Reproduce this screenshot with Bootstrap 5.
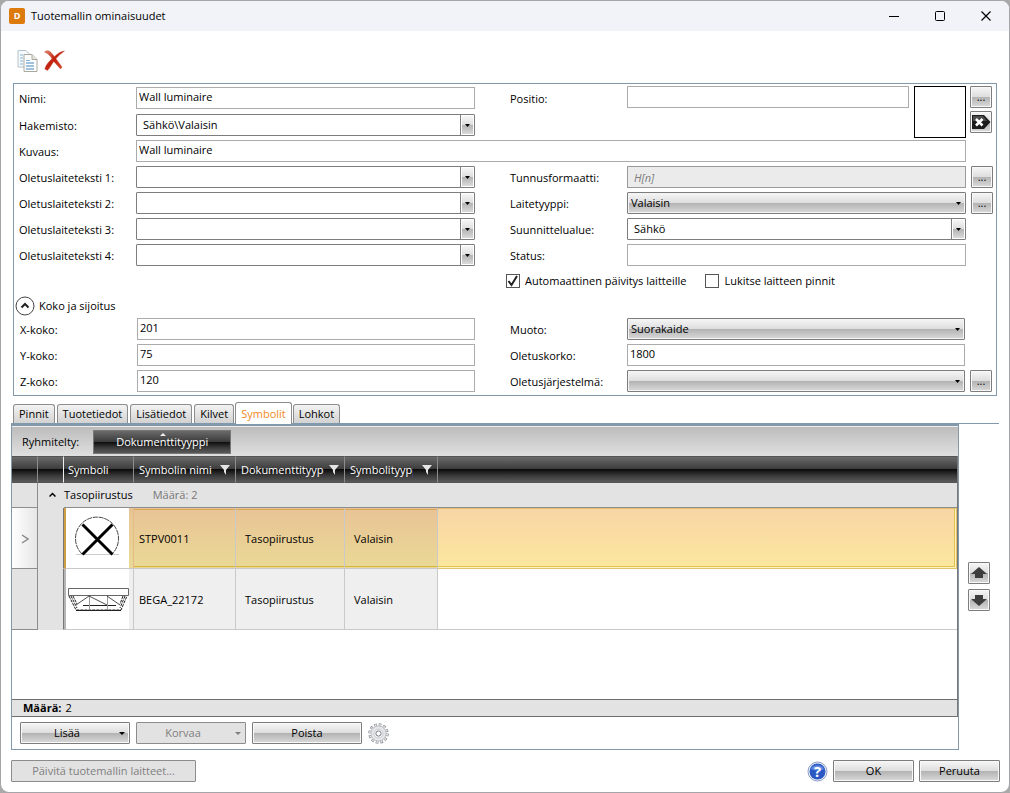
<!DOCTYPE html>
<html lang="fi">
<head>
<meta charset="utf-8">
<meta name="viewport" content="width=device-width, initial-scale=1">
<title>Tuotemallin ominaisuudet</title>
<link href="https://cdn.jsdelivr.net/npm/bootstrap@5.3.0/dist/css/bootstrap.min.css" rel="stylesheet">
<style>
:root{
  --edge:#7d7d7d; --frame:#8299ab;
  --gloss:linear-gradient(#f6f6f6,#dedede 48%,#b2b2b2 50%,#dadada);
  --dark:linear-gradient(#6a6a6a,#3c3c3c 48%,#0c0c0c 50%,#3a3a3a 75%,#5a5a5a);
  --arrow:url("data:image/svg+xml,%3Csvg xmlns='http://www.w3.org/2000/svg' width='5' height='3'%3E%3Cpath d='M0 0h5L2.500 3z' fill='%23000'/%3E%3C/svg%3E");
}
body{font:11px/16px "Open Sans","Noto Sans",sans-serif;color:#000;background:#a9a9a9}
.window{min-height:100vh;background:#fff;border:1px solid #a3a5a8;border-radius:9px;overflow:hidden}
.titlebar{height:30px;background:#f1f3f9;padding-left:8px}
.titlebar svg.logo{margin-right:6px}
.cap{width:46px;height:30px;border:0;background:none;padding:0;display:grid;place-items:center}
.tools{height:52px;padding:18px 0 0 16px;gap:6px}
.plain{border:0;background:none;padding:0;line-height:0}
.sheet{border:1px solid var(--frame);margin:0 12px 0 12px;padding:2px 3px 3px 5px}
.fields{display:grid;grid-template-columns:117px 1fr 31px 121px 1fr 27px;row-gap:4px;align-items:center;grid-auto-rows:22px}
.fields-top{grid-template-rows:24px}
.fields-size{padding:0 1px 0 1px}
.fields label{padding-top:1px}
.fields label.r{grid-column:4;padding-left:4px}
.fields .wide{grid-column:2/6}
.fields .end{justify-self:end}
.box,.combo,.pick{width:100%;min-width:0;height:22px;border:1px solid #ababab;background:#fff;border-radius:0;padding:0 2px 3px;color:#000;outline-offset:-1px}
.box.off{background:#ebebeb;color:#7c7c7c;font-style:italic;padding:0 6px;border-color:#9a9a9a}
.combo,.pick{appearance:none;border-color:var(--edge);border-radius:1px}
.combo{padding:0 20px 0 6px;background:var(--arrow) right 4px center no-repeat,var(--gloss) right 1px center/11px 18px no-repeat,linear-gradient(var(--edge),var(--edge)) right 13px top/1px 100% no-repeat,#fff}
.pick{padding:0 18px 0 3px;background:var(--arrow) right 4px center no-repeat,var(--gloss);box-shadow:inset 0 0 0 1px #f4f4f4}
.gloss{height:22px;border:1px solid var(--edge);border-radius:1px;background:var(--gloss);box-shadow:inset 0 0 0 1px #f8f8f8;padding:0 4px;color:#000}
.gloss:disabled{background:#e2e2e2;border-color:#8c8c8c;box-shadow:none;color:#7f7f7f}
.sq{width:22px;padding:0;display:grid;place-items:center;line-height:10px}
.top-right{grid-column:5/7;grid-row:1/3;align-self:start;padding-right:1px}
.top-right .thumb{margin:0 4px 0 5px}
.thumb{width:52px;height:52px;border:1px solid #000;flex:none}
.tick{appearance:none;width:14px;height:14px;border:1px solid #555;border-radius:0;margin:0 5px 0 0;background:#fff center no-repeat}
.tick:checked{background-image:url("data:image/svg+xml,%3Csvg xmlns='http://www.w3.org/2000/svg' width='12' height='12'%3E%3Cpath d='M1.500 6l3 4 5.500-9' fill='none' stroke='%23222' stroke-width='2'/%3E%3C/svg%3E")}
.fields .ticks{grid-column:4/7}
.fields .ticks label{padding-top:0}
.fields .ticks .tick:not(:first-child){margin-left:19px}
.expander{height:20px;margin:4px 0 2px -4px;gap:4px}
.tabs{height:28px;margin:0 10px 0 10px;padding-left:2px;gap:2px;border-bottom:1px solid var(--frame)}
.tabs button{height:19px;border:1px solid #8d8d8d;border-bottom:0;border-radius:3px 3px 0 0;background:linear-gradient(#f3f3f3,#d2d2d2);padding:0 5px;line-height:18px;color:#000}
.tabs button.active{height:22px;background:#fff;color:#f08a24;margin:0 -1px -1px;line-height:21px}
.panel{flex:1 1 0;min-width:0;border:1px solid var(--frame);border-top-width:2px}
.pane-row{margin:0 19px 0 10px;gap:9px}
.groupbar{height:30px;border-top:1px solid #eee;background:linear-gradient(#bcbcbc,#e0e0e0);padding-left:10px;gap:14px}
.groupkey{width:138px;height:24px;border:1px solid #777;background:var(--dark);color:#fff;padding:0;position:relative}
.groupkey::before{content:"";position:absolute;left:66px;top:2px;border:3px solid transparent;border-top:0;border-bottom-color:#eee}
.gridbox{flex:1 0 auto;border-right:1px solid #777}
.symbols{table-layout:fixed;width:100%;border-collapse:separate;border-spacing:0}
.symbols th{height:27px;background:var(--dark);color:#fff;font-weight:400;padding:0 0 0 4px;border-right:1px solid #8c8c8c;border-bottom:1px solid #555;border-top:1px solid #555;overflow:hidden;white-space:nowrap}
.symbols th:nth-child(2){border-right:1px solid #eee}
.symbols th:nth-child(n+4){padding-left:5px}
.symbols th:last-child{border-right:0}
.symbols td{padding:1px 0 0 5px}
.symbols .grp td{height:25px;background:#e3e3e3;border-bottom:1px solid #8d8d8d;padding:0}
.symbols .grp td:nth-child(2){border-bottom-color:#e3e3e3}
.grp-line{margin-left:-15px}
.grp-count{color:#777;margin-left:20px}
.symbols .item td{height:61px;border-bottom:1px solid #c9c9c9;border-right:1px solid #c9c9c9;background:#efefef}
.symbols .item td.n{padding-left:9px}
.symbols .item td.n.first{padding-left:5px}
.symbols td.mark-cell,.symbols .grp td.mark-cell{border-right:1px solid #8d8d8d;border-bottom:1px solid #8d8d8d;background:#e3e3e3;text-align:center;padding:0}
.symbols .sel td.mark-cell{background:linear-gradient(90deg,#fff,#e6e6e6)}
.symbols .item td.gut{background:#e3e3e3;border-right:1px solid #777;border-bottom-color:#e3e3e3}
.symbols .item td.pic{padding:2px 0 0 2px;border-left:2px solid #b5b5b5;background:linear-gradient(#efefef,#efefef) right/4px 100% no-repeat,#fff}
.symbols .sel td.pic{border-left-color:#cf9f45;border-right-color:#e3bd85;background:linear-gradient(#e9c396,#e9d995) right/4px 100% no-repeat,#fff}
.symbols .item td:last-child{border-right:0;background:#fff}
.symbols .sel td.n{background:linear-gradient(#d9b441,#d9b441) left 0 bottom 1px/100% 1px no-repeat,linear-gradient(#d9a757,#d9a757) left 0 top 1px/100% 1px no-repeat,linear-gradient(#e9c396,#e9d995)}
.symbols .sel td:last-child{background:linear-gradient(#f8d5a5,#fbe79e);border-bottom-color:#e0c46a;box-shadow:inset -1px 1px #e3bf6c,inset -2px -1px #fff3c4,inset -3px -2px #e5c24c}
.headname{overflow:hidden;flex:1 1 0}
.foot{height:18px;background:#e3e3e3;border-top:1px solid #6f6f6f;border-bottom:1px solid #6f6f6f;border-right:1px solid #777;padding-left:11px}
.actions{height:32px;padding:0 8px;gap:6px}
.w110{width:110px}
.drop{display:grid;grid-template-columns:1fr 12px;align-items:center;padding-left:0}
.drop::after{content:"";border:3px solid transparent;border-bottom:0;border-top-color:currentColor;width:0;justify-self:end}
.movers{width:22px;gap:5px;padding-top:138px}
.closing{height:42px;padding:0 9px 0 10px;gap:5px}
.w185{width:185px}.w81{width:81px}
</style>
</head>
<body>
<main class="window d-flex flex-column">
  <header class="titlebar d-flex align-items-center">
    <svg class="logo" width="16" height="16" viewBox="0 0 16 16" aria-hidden="true"><rect width="16" height="16" rx="2" fill="#dd7a0c"/><text x="8" y="11" text-anchor="middle" font-family="Open Sans" font-weight="700" font-size="9" fill="#fff">D</text></svg>
    <span class="me-auto">Tuotemallin ominaisuudet</span>
    <button class="cap" aria-label="Pienennä"><svg width="11" height="11"><path d="M0 5.500h10" stroke="#000"/></svg></button>
    <button class="cap" aria-label="Suurenna"><svg width="11" height="11"><rect x=".5" y=".5" width="9" height="9" rx="1" fill="none" stroke="#000"/></svg></button>
    <button class="cap" aria-label="Sulje"><svg width="11" height="11"><path d="M.5.5l9 9M9.500.5l-9 9" stroke="#000" stroke-width="1.200"/></svg></button>
  </header>

  <div class="tools d-flex align-items-start">
    <button class="plain" aria-label="Kopioi"><svg width="21" height="24" viewBox="0 0 21 24"><path d="M1 1.500h8l4 4V18H1z" fill="#f6fafc" stroke="#b4c2cc"/><path d="M3 6h3M3 9h3M3 12h3M3 15h3" stroke="#84b4da"/><path d="M7 5.500h8l5 5V22.500H7z" fill="#fdfdfd" stroke="#a9a9a0"/><path d="M15 5.500v5h5" fill="#e6e6e0" stroke="#a9a9a0"/><path d="M9 11.500h4" stroke="#84b4da"/><path d="M9 14h8M9 17h8M9 20h8" stroke="#3f86bf"/></svg></button>
    <button class="plain" aria-label="Poista malli"><svg width="21" height="24" viewBox="0 0 21 24"><defs><linearGradient id="rd" x1="0" y1="0" x2="1" y2="1"><stop offset="0" stop-color="#e28a72"/><stop offset=".45" stop-color="#c2210c"/><stop offset="1" stop-color="#dc4a33"/></linearGradient></defs><path d="M.5 3C2 1.500 5 1.200 7 3.500l3.500 4C13.500 4.500 17 2.300 20.500 2 17 4.500 14 7 12 9.800L18 18 16.500 20 9.800 12.500C7.500 15.500 6 19 3.500 21.500L.8 20C2 15.500 5 12.500 8 9.800 6 6.500 4 4.500.5 3z" fill="url(#rd)" stroke="#c54a38" stroke-width=".4"/></svg></button>
  </div>

  <section class="sheet">
    <div class="fields fields-top">
      <label for="nimi">Nimi:</label><input id="nimi" class="box" value="Wall luminaire">
      <label class="r" for="positio">Positio:</label>
      <div class="top-right d-flex align-items-start">
        <input id="positio" class="box">
        <div class="thumb"></div>
        <div class="d-grid" style="row-gap:3px">
          <button class="gloss sq" aria-label="Valitse kuva">...</button>
          <button class="gloss sq" aria-label="Poista kuva"><svg width="20" height="20" viewBox="0 0 20 20"><path d="M1 3h12l6.500 7-6.500 7H1z" fill="#1c1c1c"/><path d="M2 4h10l4 5H2z" fill="#4c4c4c"/><path d="M5 7l6.500 6.500M11.500 7L5 13.500" stroke="#fff" stroke-width="2.500"/></svg></button>
        </div>
      </div>
      <label for="hak" style="grid-column:1">Hakemisto:</label><select id="hak" class="combo"><option>Sähkö\Valaisin</option></select>
      <label for="kuv" style="grid-column:1">Kuvaus:</label><input id="kuv" class="box wide" value="Wall luminaire">
      <label for="o1" style="grid-column:1">Oletuslaiteteksti 1:</label><select id="o1" class="combo"><option></option></select>
      <label class="r" for="tun">Tunnusformaatti:</label><input id="tun" class="box off" value="H[n]" disabled><button class="gloss sq end">...</button>
      <label for="o2">Oletuslaiteteksti 2:</label><select id="o2" class="combo"><option></option></select>
      <label class="r" for="lt">Laitetyyppi:</label><select id="lt" class="pick"><option>Valaisin</option></select><button class="gloss sq end">...</button>
      <label for="o3">Oletuslaiteteksti 3:</label><select id="o3" class="combo"><option></option></select>
      <label class="r" for="sa">Suunnittelualue:</label><select id="sa" class="combo"><option>Sähkö</option></select>
      <label for="o4" style="grid-column:1">Oletuslaiteteksti 4:</label><select id="o4" class="combo"><option></option></select>
      <label class="r" for="st">Status:</label><input id="st" class="box">
      <div class="ticks d-flex align-items-center">
        <input type="checkbox" class="tick" id="auto" checked><label for="auto">Automaattinen päivitys laitteille</label>
        <input type="checkbox" class="tick" id="luk"><label for="luk">Lukitse laitteen pinnit</label>
      </div>
    </div>
    <div class="expander d-flex align-items-center">
      <button class="plain" aria-label="Koko ja sijoitus" aria-expanded="true"><svg width="20" height="20"><circle cx="10" cy="10" r="9" fill="#fff" stroke="#444"/><path d="M6.500 11.500L10 8l3.500 3.500" fill="none" stroke="#222" stroke-width="2"/></svg></button>
      <span>Koko ja sijoitus</span>
    </div>
    <div class="fields fields-size">
      <label for="xk">X-koko:</label><input id="xk" class="box" value="201">
      <label class="r" for="mu">Muoto:</label><select id="mu" class="pick"><option>Suorakaide</option></select>
      <label for="yk" style="grid-column:1">Y-koko:</label><input id="yk" class="box" value="75">
      <label class="r" for="ok">Oletuskorko:</label><input id="ok" class="box" value="1800">
      <label for="zk" style="grid-column:1">Z-koko:</label><input id="zk" class="box" value="120">
      <label class="r" for="oj">Oletusjärjestelmä:</label><select id="oj" class="pick"><option></option></select><button class="gloss sq end">...</button>
    </div>
  </section>

  <nav class="tabs d-flex align-items-end" role="tablist">
    <button role="tab">Pinnit</button><button role="tab">Tuotetiedot</button><button role="tab">Lisätiedot</button><button role="tab">Kilvet</button><button role="tab" class="active" aria-selected="true">Symbolit</button><button role="tab">Lohkot</button>
  </nav>

  <div class="pane-row d-flex flex-grow-1">
    <section class="panel d-flex flex-column">
      <div class="groupbar d-flex align-items-center">
        <span>Ryhmitelty:</span><button class="groupkey">Dokumenttityyppi</button>
      </div>
      <div class="gridbox">
        <table class="symbols">
          <colgroup><col style="width:26px"><col style="width:26px"><col style="width:70px"><col style="width:102px"><col style="width:109px"><col style="width:93px"><col></colgroup>
          <thead><tr>
            <th></th><th></th><th>Symboli</th>
            <th><div class="d-flex align-items-center"><span class="headname">Symbolin nimi</span><svg class="me-1" width="12" height="12"><path d="M1 1h10L7 6v5L5 8V6z" fill="#e4e4e4"/></svg></div></th>
            <th><div class="d-flex align-items-center"><span class="headname">Dokumenttityyppi</span><svg class="ms-1 me-1" width="12" height="12"><path d="M1 1h10L7 6v5L5 8V6z" fill="#e4e4e4"/></svg></div></th>
            <th><div class="d-flex align-items-center"><span class="headname">Symbolityyppi</span><svg class="ms-2 me-1" width="12" height="12"><path d="M1 1h10L7 6v5L5 8V6z" fill="#e4e4e4"/></svg></div></th>
            <th></th>
          </tr></thead>
          <tbody>
            <tr class="grp"><td class="mark-cell"></td><td></td><td colspan="5"><div class="grp-line d-flex align-items-center"><svg class="me-2" width="7" height="6"><path d="M.5 4.500l3-3 3 3" fill="none" stroke="#000" stroke-width="1.500"/></svg><span>Tasopiirustus</span><span class="grp-count">Määrä: 2</span></div></td></tr>
            <tr class="item sel"><td class="mark-cell"><svg width="8" height="10"><path d="M1 1l6 4-6 4" fill="none" stroke="#888" stroke-width="1.500"/></svg></td><td class="gut"></td>
              <td class="pic"><svg width="62" height="56" viewBox="0 0 62 56" fill="none"><path d="M14 43A21.500 21.500 0 1 1 44 43" stroke="#444" stroke-width="1" stroke-dasharray="5 .8"/><path d="M8 43.500h43" stroke="#ccc"/><path d="M14.500 13.500l30 30M44.500 13.500l-30 30" stroke="#000" stroke-width="3"/></svg></td>
              <td class="n first">STPV0011</td><td class="n">Tasopiirustus</td><td class="n">Valaisin</td><td></td></tr>
            <tr class="item"><td class="mark-cell"></td><td class="gut"></td>
              <td class="pic"><svg width="62" height="26" viewBox="0 0 62 26" fill="none" stroke="#222"><path d="M.5 1.500h60v7H.5z" stroke="#666"/><path d="M1 9l7 14h45l6-14M3 9l6 12M5 9l4 8M57 9l-5 12M55 9l-3 8" stroke-dasharray="3 1"/><path d="M8 23.500h45M15 18.500h33"/><path d="M21.500 9v14M39.500 9v14" stroke="#999"/><path d="M8 18l13-9 18 9M39 9l13 9" stroke-width=".8"/></svg></td>
              <td class="n first">BEGA_22172</td><td class="n">Tasopiirustus</td><td class="n">Valaisin</td><td></td></tr>
          </tbody>
        </table>
      </div>
      <div class="foot d-flex align-items-center"><b class="me-1">Määrä:</b>2</div>
      <div class="actions d-flex align-items-center">
        <button class="gloss w110 drop"><span>Lisää</span></button>
        <button class="gloss w110 drop" disabled><span>Korvaa</span></button>
        <button class="gloss w110">Poista</button>
        <button class="plain" aria-label="Asetukset"><svg width="21" height="21" viewBox="-10.500 -10.500 21 21"><circle r="8.900" fill="none" stroke="#85888d" stroke-width="2.600" stroke-dasharray="2.660 2"/><circle r="8.300" fill="none" stroke="#e9eaeb" stroke-width="2.400" stroke-dasharray="1.500 2.846" stroke-dashoffset="-.5"/><circle r="7.600" fill="#e6e7e9" stroke="#a3a6ab" stroke-width=".7"/><circle r="4.500" fill="#f4f4f5" stroke="#c9cbce"/><circle r="2.600" fill="#fff" stroke="#777b82"/></svg></button>
      </div>
    </section>
    <div class="movers d-flex flex-column">
      <button class="gloss sq" aria-label="Ylös"><svg width="18" height="14"><path d="M9 1l8 7h-4v4H5V8H1z" fill="#3d3d3d"/></svg></button>
      <button class="gloss sq" aria-label="Alas"><svg width="18" height="14"><path d="M9 13L1 6h4V2h8v4h4z" fill="#3d3d3d"/></svg></button>
    </div>
  </div>

  <footer class="closing d-flex align-items-center">
    <button class="gloss w185 me-auto" disabled>Päivitä tuotemallin laitteet...</button>
    <button class="plain" aria-label="Ohje"><svg width="21" height="21" viewBox="0 0 21 21"><circle cx="10.500" cy="10.500" r="9.500" fill="#e9eef8" stroke="#8ba0c8"/><circle cx="10.500" cy="10.500" r="8" fill="#2b59c3"/><path d="M4 8a7 6 0 0 1 13 0q-6 3-13 0z" fill="#5f8ae0"/><text x="10.500" y="16" text-anchor="middle" font-family="Open Sans" font-weight="700" font-size="15" fill="#fff">?</text></svg></button>
    <button class="gloss w81">OK</button>
    <button class="gloss w81">Peruuta</button>
  </footer>
</main>
<script src="https://cdn.jsdelivr.net/npm/bootstrap@5.3.0/dist/js/bootstrap.bundle.min.js"></script>
</body>
</html>
